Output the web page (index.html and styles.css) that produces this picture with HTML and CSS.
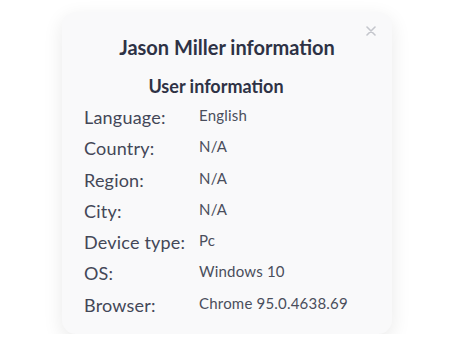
FILE: index.html
```html
<!DOCTYPE html>
<html lang="en">
<head>
    <meta charset="UTF-8">
    <title>User information</title>
    <link rel="stylesheet" href="styles.css">
</head>
<body>
    <div class="info-modal">
        <button class="close-btn" aria-label="Close">
            <svg width="10" height="10" viewBox="0 0 10 10"><path d="M1 1L9 9M9 1L1 9" stroke="#c4c6cc" stroke-width="1.6" stroke-linecap="round"/></svg>
        </button>
        <h2 class="modal-title">Jason Miller information</h2>
        <h3 class="section-title">User information</h3>
        <div class="info-list">
            <div class="info-row"><span class="info-label">Language:</span><span class="info-value">English</span></div>
            <div class="info-row"><span class="info-label">Country:</span><span class="info-value">N/A</span></div>
            <div class="info-row"><span class="info-label">Region:</span><span class="info-value">N/A</span></div>
            <div class="info-row"><span class="info-label">City:</span><span class="info-value">N/A</span></div>
            <div class="info-row"><span class="info-label">Device type:</span><span class="info-value">Pc</span></div>
            <div class="info-row"><span class="info-label">OS:</span><span class="info-value">Windows 10</span></div>
            <div class="info-row"><span class="info-label">Browser:</span><span class="info-value">Chrome 95.0.4638.69</span></div>
        </div>
    </div>
</body>
</html>
```

FILE: styles.css
```css
body {
    margin: 0;
    background: #ffffff;
    font-family: "Lato", "Noto Sans", sans-serif;
    color: #2e3245;
}

.info-modal {
    position: relative;
    width: 330px;
    height: 322px;
    box-sizing: border-box;
    margin: 12px 0 0 62px;
    padding: 23px 22px 0 22px;
    background: #f9f9fa;
    border-radius: 14px;
    box-shadow: 0 6px 20px rgba(0, 0, 0, 0.09);
}

.close-btn {
    position: absolute;
    top: 12px;
    right: 16px;
    padding: 0;
    border: none;
    background: none;
    cursor: pointer;
}

.modal-title {
    margin: 0;
    text-align: center;
    font-size: 20px;
    font-weight: 700;
    line-height: 24px;
}

.section-title {
    margin: 16px 22px 9px 0;
    text-align: center;
    font-size: 18px;
    font-weight: 700;
    line-height: 22px;
}

.info-list {
    display: flex;
    flex-direction: column;
}

.info-row {
    display: flex;
    align-items: flex-start;
    height: 31.3px;
}

.info-label {
    width: 115px;
    font-size: 18px;
    line-height: 22px;
    letter-spacing: 0.2px;
    color: #434757;
}

.info-value {
    font-size: 15px;
    line-height: 18px;
    letter-spacing: 0.2px;
    color: #4a4e5c;
}
```
